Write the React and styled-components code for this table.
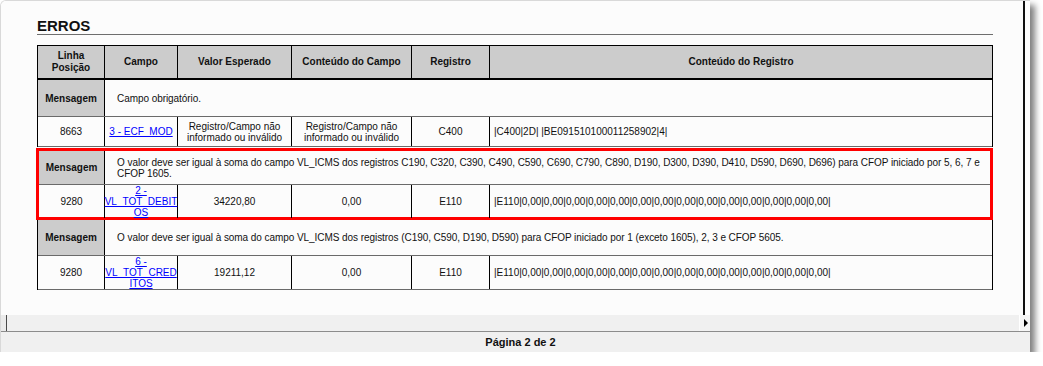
import React from 'react';
import styled, { createGlobalStyle } from 'styled-components';

const GlobalStyle = createGlobalStyle`
  html, body { margin: 0; padding: 0; background: #ffffff; }
  body { font-family: "Liberation Sans", Arial, sans-serif; color: #000; }
`;

const COLS = 'var(--lead, 67px) 73px 114px 120px 78px 1fr';

const Window = styled.div`
  box-sizing: border-box;
  width: 1030px;
  height: 352px;
  display: flex;
  flex-direction: column;
  background: #ffffff;
  border-top: 1px solid #d9d9d9;
  border-left: 1px solid #d9d9d9;
  border-top-left-radius: 6px;
  box-shadow: 5px 5px 6px rgba(0, 0, 0, 0.5);
  overflow: hidden;
`;

const Viewport = styled.div`
  display: flex;
  height: 314px;
`;

const Page = styled.div`
  box-sizing: border-box;
  width: 1024px;
  background: #fcfcfc;
  border-right: 2px solid #111;
  padding: 17px 0 0 36px;
`;

const Frame = styled.div`
  flex: 1;
  background: #ffffff;
`;

const Title = styled.h2`
  width: 956px;
  margin: 0;
  font-size: 15px;
  font-weight: bold;
  line-height: 16px;
  color: #111;
  border-bottom: 1px solid #6e6e6e;
`;

const Table = styled.div`
  width: 956px;
  margin-top: 10px;
  display: flex;
  flex-direction: column;
`;

const HeaderRow = styled.div`
  display: grid;
  grid-template-columns: ${COLS};
  box-sizing: border-box;
  height: 35px;
  border: 1px solid #000;
  border-bottom-width: 2px;
  background: #cccccc;
`;

const HeadCell = styled.div`
  display: flex;
  align-items: center;
  justify-content: center;
  text-align: center;
  font-size: 10px;
  font-weight: bold;
  line-height: 12px;
  color: #111;
  border-right: 1px solid #000;
  &:last-child { border-right: 0; }
`;

const Row = styled.div`
  display: grid;
  grid-template-columns: ${COLS};
  box-sizing: border-box;
  height: ${p => p.$h}px;
  border-bottom: 1px solid #6a6a6a;
`;

const Group = styled.div`
  display: flex;
  flex-direction: column;
  --lead: ${p => (p.$highlight ? '66px' : '67px')};
  border-left: ${p => (p.$highlight ? '3px solid #ff0000' : '1px solid #000')};
  border-right: ${p => (p.$highlight ? '3px solid #ff0000' : '1px solid #000')};
  border-top: ${p => (p.$highlight ? '3px solid #ff0000' : '0')};
  border-bottom: ${p => (p.$highlight ? '3px solid #ff0000' : '0')};
  margin: ${p => (p.$highlight ? '1px 0 0 -1px' : '0')};
  ${p => p.$highlight && `& > ${Row}:last-child { border-bottom: 0; }`}
`;

const Label = styled.div`
  display: flex;
  align-items: center;
  justify-content: center;
  background: #cccccc;
  font-size: 10px;
  font-weight: bold;
  color: #111;
  border-right: 1px solid #000;
`;

const MessageText = styled.div`
  grid-column: 2 / -1;
  display: flex;
  align-items: center;
  padding: 0 0 0 12px;
  font-size: 10px;
  line-height: 11px;
  letter-spacing: -0.06px;
  color: #111;
`;

const Cell = styled.div`
  display: flex;
  align-items: center;
  justify-content: ${p => (p.$left ? 'flex-start' : 'center')};
  text-align: ${p => (p.$left ? 'left' : 'center')};
  padding: ${p => (p.$left ? '0 4px' : '0 2px')};
  font-size: 10px;
  line-height: 11px;
  color: #111;
  border-right: 1px solid #000;
  &:last-child { border-right: 0; }
`;

const FieldLink = styled.a`
  color: #0000ff;
  text-decoration: underline;
`;

const Scrollbar = styled.div`
  display: flex;
  height: 16px;
  background: #f0f0f0;
`;

const ScrollCap = styled.div`
  width: 5px;
  background: #ebebeb;
`;

const ScrollTrack = styled.div`
  flex: 1;
  border-left: 1px solid #4a4a4a;
  background: #f0f0f0;
`;

const ScrollButton = styled.div`
  box-sizing: border-box;
  width: 11px;
  display: flex;
  align-items: center;
  justify-content: center;
  background: #f6f6f6;
  border-left: 1px solid #ffffff;
  &::after {
    content: '';
    width: 0;
    height: 0;
    border-left: 4px solid #000;
    border-top: 4px solid transparent;
    border-bottom: 4px solid transparent;
    margin-left: 2px;
  }
`;

const StatusBar = styled.div`
  flex: 1;
  display: flex;
  align-items: center;
  justify-content: center;
  padding-left: 10px;
  background: #f0f0f0;
  border-top: 1px solid #8c8c8c;
  font-size: 11px;
  font-weight: bold;
  color: #111;
`;

const zeros = '|E110' + '|0,00'.repeat(14) + '|';

const errors = [
  {
    message: 'Campo obrigatório.',
    msgH: 37,
    dataH: 30,
    line: '8663',
    field: ['3 - ECF_MOD'],
    expected: 'Registro/Campo não informado ou inválido',
    content: 'Registro/Campo não informado ou inválido',
    record: 'C400',
    recordContent: '|C400|2D| |BE091510100011258902|4|',
  },
  {
    highlight: true,
    message:
      'O valor deve ser igual à soma do campo VL_ICMS dos registros C190, C320, C390, C490, C590, C690, C790, C890, D190, D300, D390, D410, D590, D690, D696) para CFOP iniciado por 5, 6, 7 e CFOP 1605.',
    msgH: 34,
    dataH: 32,
    line: '9280',
    field: ['2 -', 'VL_TOT_DEBIT', 'OS'],
    expected: '34220,80',
    content: '0,00',
    record: 'E110',
    recordContent: zeros,
  },
  {
    message:
      'O valor deve ser igual à soma do campo VL_ICMS dos registros (C190, C590, D190, D590) para CFOP iniciado por 1 (exceto 1605), 2, 3 e CFOP 5605.',
    msgH: 36,
    dataH: 34,
    line: '9280',
    field: ['6 -', 'VL_TOT_CRED', 'ITOS'],
    expected: '19211,12',
    content: '0,00',
    record: 'E110',
    recordContent: zeros,
  },
];

const headers = [['Linha', 'Posição'], ['Campo'], ['Valor Esperado'], ['Conteúdo do Campo'], ['Registro'], ['Conteúdo do Registro']];

function Lines({ parts }) {
  return parts.map((p, i) => (
    <React.Fragment key={i}>
      {i > 0 && <br />}
      {p}
    </React.Fragment>
  ));
}

export default function App() {
  return (
    <>
      <GlobalStyle />
      <Window>
        <Viewport>
          <Page>
            <Title>ERROS</Title>
            <Table>
              <HeaderRow>
                {headers.map((h, i) => (
                  <HeadCell key={i}>
                    <span><Lines parts={h} /></span>
                  </HeadCell>
                ))}
              </HeaderRow>
              {errors.map((e, i) => (
                <Group key={i} $highlight={e.highlight}>
                  <Row $h={e.msgH}>
                    <Label>Mensagem</Label>
                    <MessageText>{e.message}</MessageText>
                  </Row>
                  <Row $h={e.dataH}>
                    <Cell>{e.line}</Cell>
                    <Cell>
                      <FieldLink href="#">
                        <Lines parts={e.field} />
                      </FieldLink>
                    </Cell>
                    <Cell>{e.expected}</Cell>
                    <Cell>{e.content}</Cell>
                    <Cell>{e.record}</Cell>
                    <Cell $left>{e.recordContent}</Cell>
                  </Row>
                </Group>
              ))}
            </Table>
          </Page>
          <Frame />
        </Viewport>
        <Scrollbar>
          <ScrollCap />
          <ScrollTrack />
          <ScrollButton />
        </Scrollbar>
        <StatusBar>Página 2 de 2</StatusBar>
      </Window>
    </>
  );
}
